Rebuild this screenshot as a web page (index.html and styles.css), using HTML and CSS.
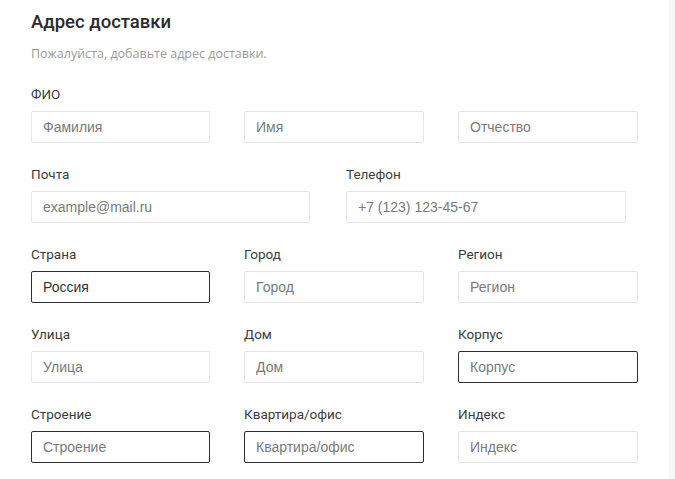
FILE: index.html
```html
<!DOCTYPE html>
<html lang="ru">
<head>
  <meta charset="UTF-8">
  <meta name="viewport" content="width=device-width, initial-scale=1.0">
  <title>Адрес доставки</title>
  <link rel="stylesheet" href="styles.css">
</head>
<body>
  <div class="page">
    <form class="address-form">
      <h2 class="form-title">Адрес доставки</h2>
      <p class="form-hint">Пожалуйста, добавьте адрес доставки.</p>

      <div class="field">
        <label class="field-label">ФИО</label>
        <div class="row row-3">
          <input class="input" type="text" placeholder="Фамилия">
          <input class="input" type="text" placeholder="Имя">
          <input class="input" type="text" placeholder="Отчество">
        </div>
      </div>

      <div class="row row-2">
        <div class="field">
          <label class="field-label">Почта</label>
          <input class="input" type="email" placeholder="example@mail.ru">
        </div>
        <div class="field">
          <label class="field-label">Телефон</label>
          <input class="input" type="tel" placeholder="+7 (123) 123-45-67">
        </div>
      </div>

      <div class="row row-3">
        <div class="field">
          <label class="field-label">Страна</label>
          <input class="input active" type="text" value="Россия">
        </div>
        <div class="field">
          <label class="field-label">Город</label>
          <input class="input" type="text" placeholder="Город">
        </div>
        <div class="field">
          <label class="field-label">Регион</label>
          <input class="input" type="text" placeholder="Регион">
        </div>
      </div>

      <div class="row row-3">
        <div class="field">
          <label class="field-label">Улица</label>
          <input class="input" type="text" placeholder="Улица">
        </div>
        <div class="field">
          <label class="field-label">Дом</label>
          <input class="input" type="text" placeholder="Дом">
        </div>
        <div class="field">
          <label class="field-label">Корпус</label>
          <input class="input active" type="text" placeholder="Корпус">
        </div>
      </div>

      <div class="row row-3">
        <div class="field">
          <label class="field-label">Строение</label>
          <input class="input active" type="text" placeholder="Строение">
        </div>
        <div class="field">
          <label class="field-label">Квартира/офис</label>
          <input class="input active" type="text" placeholder="Квартира/офис">
        </div>
        <div class="field">
          <label class="field-label">Индекс</label>
          <input class="input" type="text" placeholder="Индекс">
        </div>
      </div>
    </form>
  </div>
</body>
</html>
```

FILE: styles.css
```css
html {
  background-color: #F7F7F7;
}

body {
  margin: 0;
  font-family: Roboto, "Open Sans", Arial, sans-serif;
  color: #333;
}

.page {
  width: 669px;
  min-height: 479px;
  background-color: #FFFFFF;
}

.address-form {
  display: flex;
  flex-direction: column;
  gap: 23px;
  padding: 10px 0 0 31px;
}

.form-title {
  margin: 0;
  font-size: 18.5px;
  font-weight: 500;
  line-height: 24px;
  color: #2B2B2B;
}

.form-hint {
  margin: -12px 0 0 0;
  font-family: "Open Sans", Roboto, Arial, sans-serif;
  font-size: 12.5px;
  line-height: 18px;
  color: #9A9A9A;
}

.field {
  display: flex;
  flex-direction: column;
}

.field-label {
  margin-bottom: 9px;
  font-size: 13.5px;
  line-height: 16px;
  color: #3C3C3C;
}

.row {
  display: grid;
}

.row-3 {
  grid-template-columns: 179px 180px 180px;
  column-gap: 34px;
}

.row-2 {
  grid-template-columns: 279px 280px;
  column-gap: 36px;
}

.input {
  box-sizing: border-box;
  width: 100%;
  height: 32px;
  margin: 0;
  padding: 0 11px;
  border: 1px solid #E4E4E4;
  border-radius: 2px;
  background-color: #FFFFFF;
  font-family: "Liberation Sans", Arial, sans-serif;
  font-size: 14px;
  color: #333;
  outline: none;
}

.input::placeholder {
  color: #7A7A7A;
}

.input.active {
  border-color: #2E2E2E;
}
```
